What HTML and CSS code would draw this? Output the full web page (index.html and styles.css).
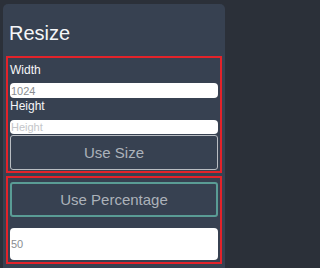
FILE: index.html
```
<!DOCTYPE html>
<html>
<head>
<meta charset="utf-8">
<link rel="stylesheet" href="styles.css">
</head>
<body>
<div class="card">
  <h2 class="title">Resize</h2>
  <div class="box box-size">
    <label class="lbl lbl-w">Width</label>
    <input class="inp inp-sm" value="1024">
    <label class="lbl lbl-h">Height</label>
    <input class="inp inp-sm inp-h" placeholder="Height">
    <button class="btn btn-size">Use Size</button>
  </div>
  <div class="box box-pct">
    <button class="btn btn-pct">Use Percentage</button>
    <input class="inp inp-big" value="50">
  </div>
</div>
</body>
</html>
```
FILE: styles.css
```
html, body {
  margin: 0;
  padding: 0;
  background: #2b3039;
  font-family: "Liberation Sans", Arial, sans-serif;
}
body {
  width: 230px;
  height: 268px;
  overflow: hidden;
}
.card {
  width: 222px;
  margin: 4px 0 0 3px;
  padding: 18px 0 4px;
  background: #374151;
  border-radius: 5px 5px 0 0;
}
.title {
  margin: 0 0 11px 6px;
  font-size: 20px;
  line-height: 23px;
  font-weight: normal;
  color: #f5f6f8;
}
.box {
  margin: 0 3px;
  border: 2px solid #e3232a;
  padding: 0 2px;
}
.box-size {
  padding-top: 5px;
  padding-bottom: 1px;
}
.box-pct {
  margin-top: 3px;
  padding-top: 4px;
  padding-bottom: 2px;
}
.lbl {
  display: block;
  font-size: 12px;
  line-height: 14px;
  color: #f5f6f8;
}
.lbl-w { margin-bottom: 6px; }
.lbl-h { margin-top: 1px; margin-bottom: 7px; }
.inp {
  display: block;
  box-sizing: border-box;
  width: 100%;
  margin: 0;
  border: none;
  outline: none;
  background: #ffffff;
  border-radius: 4px;
  padding: 0 1px;
  font-family: "Liberation Sans", Arial, sans-serif;
  font-size: 11px;
  color: #8a8d91;
}
.inp::placeholder { color: #c4c6c9; }
.inp-sm { height: 15px; }
.inp-h { height: 14px; }
.inp-big { height: 32px; margin-top: 11px; }
.btn {
  display: block;
  box-sizing: border-box;
  width: 100%;
  height: 35px;
  margin: 0;
  background: #374151;
  border-radius: 3px;
  font-family: "Liberation Sans", Arial, sans-serif;
  font-size: 15px;
  color: #acb2ba;
  padding: 0;
}
.btn-size {
  margin-top: 1px;
  border: 1px solid #b9bdc2;
}
.btn-pct {
  border: 2px solid #5a9c95;
}
```
